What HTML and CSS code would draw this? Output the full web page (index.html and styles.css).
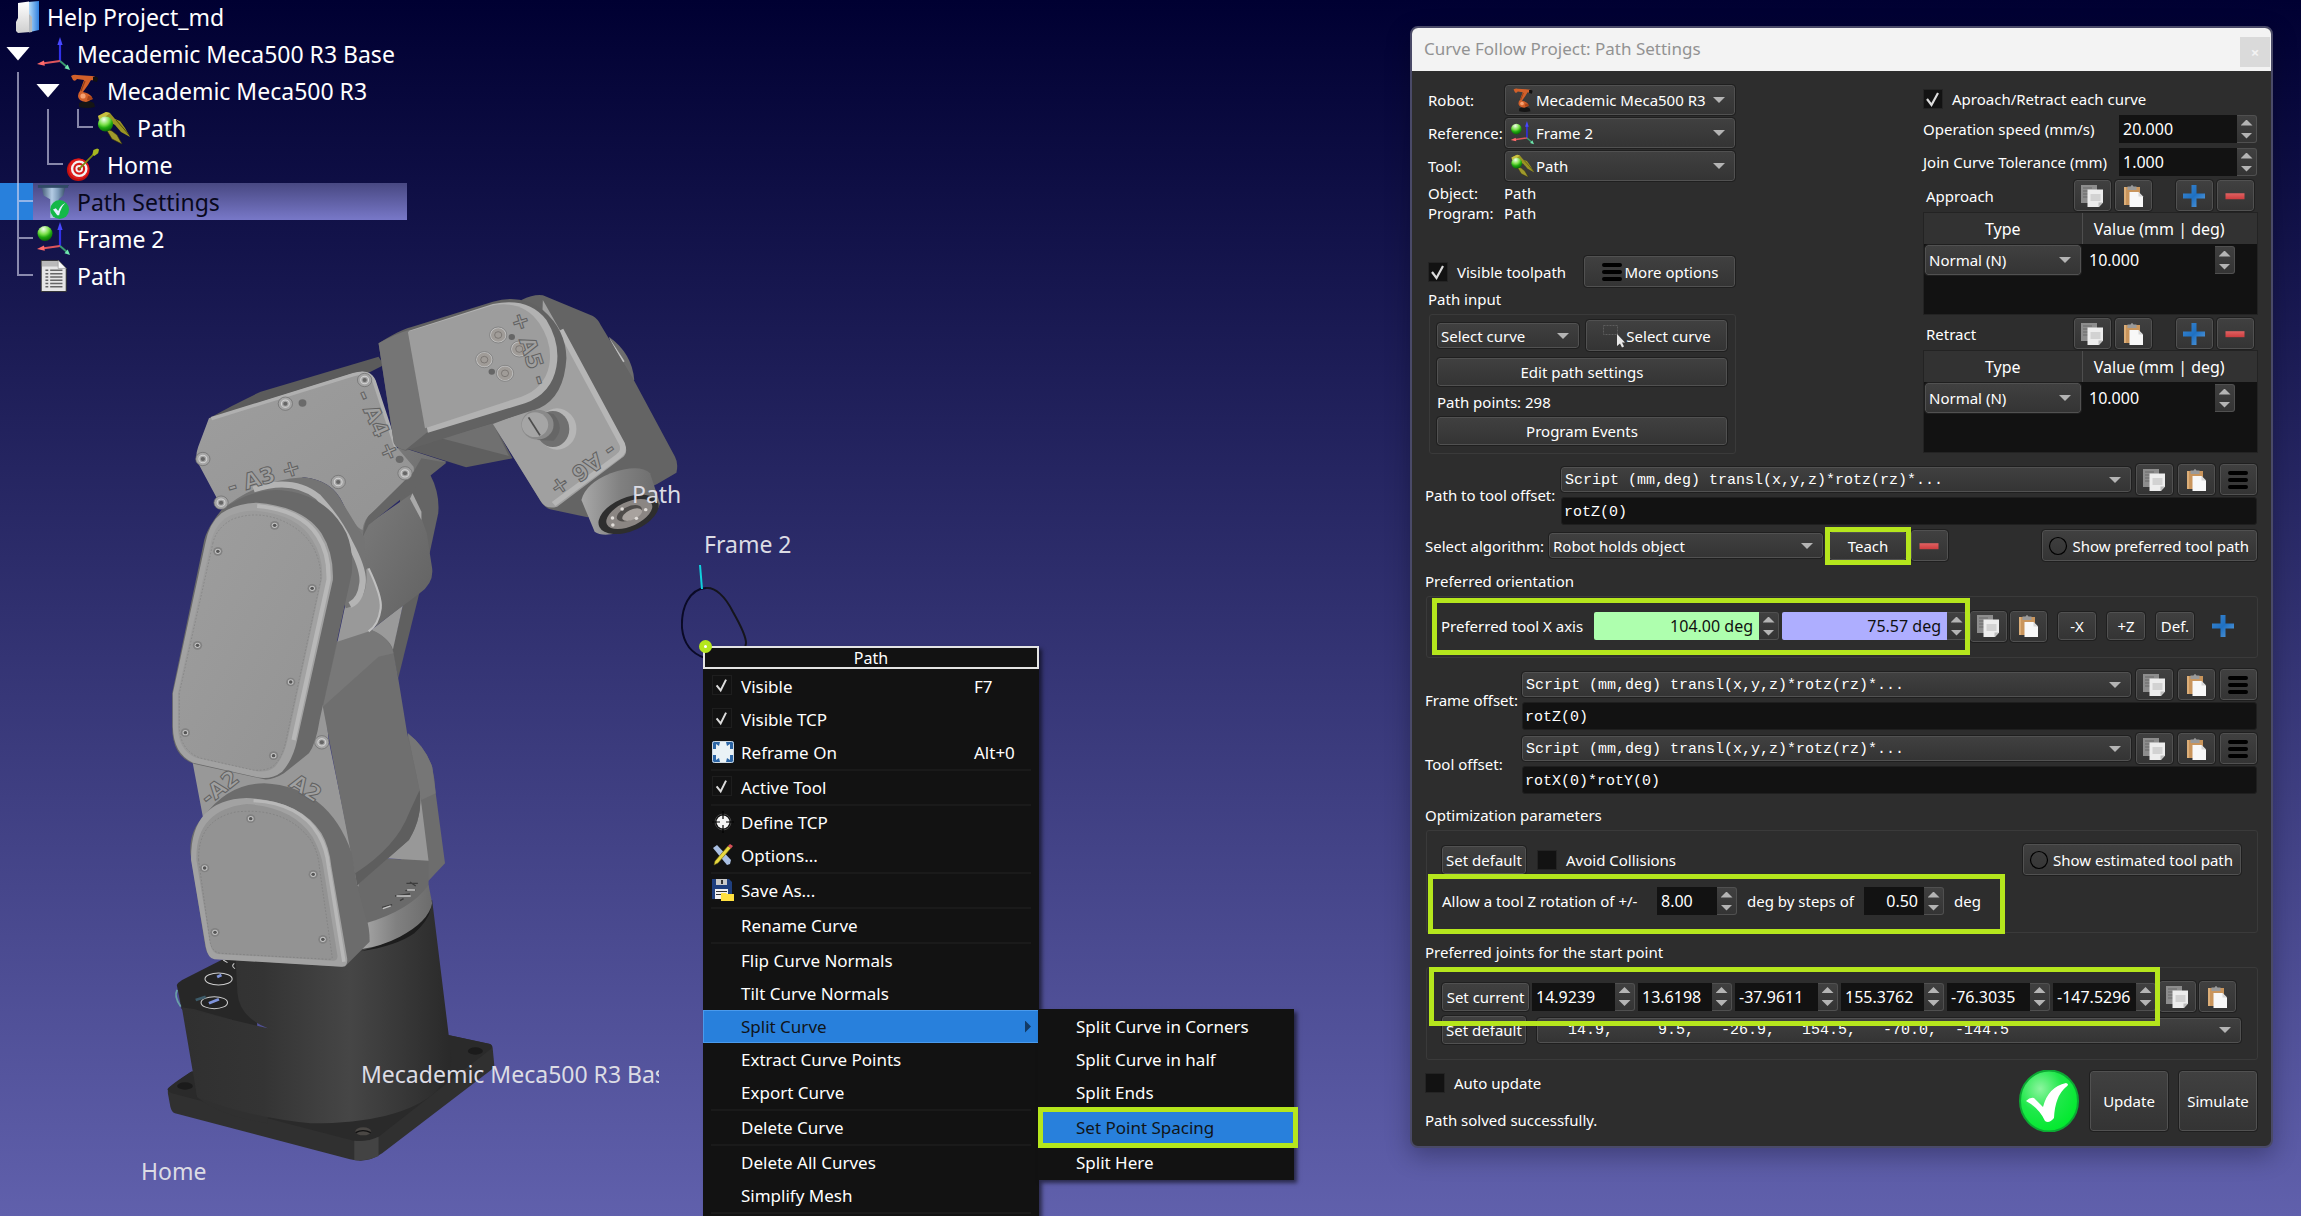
FILE: index.html
```html
<!DOCTYPE html>
<html lang="en">
<head>
<meta charset="utf-8">
<title>Help Project_md</title>
<link rel="stylesheet" href="styles.css">
</head>
<body>
<svg width="0" height="0" class="defs" aria-hidden="true">
  <defs>
    <radialGradient id="ball" cx=".4" cy=".2" r=".8"><stop offset="0" stop-color="#f4fff0"/><stop offset=".45" stop-color="#7be04a"/><stop offset=".7" stop-color="#1fa80f"/><stop offset="1" stop-color="#0b6a06"/></radialGradient>
    <linearGradient id="blueg" x1="0" y1="0" x2="1" y2="0"><stop offset="0" stop-color="#bfe2fa"/><stop offset="1" stop-color="#2f7fe0"/></linearGradient>
    <linearGradient id="whiteg" x1="0" y1="0" x2="0" y2="1"><stop offset="0" stop-color="#ffffff"/><stop offset="1" stop-color="#cfcfcf"/></linearGradient>
    <linearGradient id="funnel" x1="0" y1="0" x2="1" y2="0"><stop offset="0" stop-color="#1c3350"/><stop offset=".45" stop-color="#b4cce4"/><stop offset=".65" stop-color="#7f9dbb"/><stop offset="1" stop-color="#16283e"/></linearGradient>
    <linearGradient id="plusg" x1="0" y1="0" x2="1" y2="1"><stop offset="0" stop-color="#3f86cc"/><stop offset=".5" stop-color="#1e70c2"/><stop offset="1" stop-color="#5e9fdc"/></linearGradient>
    <linearGradient id="minusg" x1="0" y1="0" x2="0" y2="1"><stop offset="0" stop-color="#e06262"/><stop offset="1" stop-color="#cc3c3e"/></linearGradient>
    <radialGradient id="okg" cx=".35" cy=".3" r=".75"><stop offset="0" stop-color="#8cf59f"/><stop offset=".5" stop-color="#1fe84a"/><stop offset="1" stop-color="#00ea2c"/></radialGradient>
  </defs>
  <symbol id="i-folder" viewBox="0 0 34 34"><path d="M22 2 33 1V30L24 32z" fill="url(#blueg)"/><path d="M12 3 23 1.500V14l1.500 3V32L12 33l-2-2V22l2-4z" fill="url(#whiteg)"/><path d="M23 14l3 3v15l-3 .5z" fill="#b5b9bd"/></symbol>
  <symbol id="i-axes" viewBox="0 0 34 34"><path d="M24 24V5" stroke="#3030e8" stroke-width="2.200"/><path d="M24 0l2.600 8h-5.200z" fill="#4848ff"/><path d="M24 24 6 26.500" stroke="#e0555c" stroke-width="2"/><path d="M1 27l7-3.400.8 5.200z" fill="#ff6b6b"/><path d="M24 24l7 6" stroke="#3c9c70" stroke-width="2"/><path d="M34 33l-5.500-1.800 3.200-3.800z" fill="#6fe8ae"/></symbol>
  <symbol id="i-frame" viewBox="0 0 34 34"><use href="#i-axes"/><circle cx="9" cy="11.500" r="7.500" fill="url(#ball)"/></symbol>
  <symbol id="i-robot" viewBox="0 0 34 34"><path d="M13 29q8-4 15 0l1 4q-8 2-16 0z" fill="#151515"/><path d="M5 2q3-2 6-1l15 1q3 0 4 2-2 3-5 2l-3 5-5 7q6 1 9 5-1 4-6 5-8-1-8-6 0-3 2-5l4-11-7-1q-2 3-4 1z" fill="#d2602a"/><path d="M27 3q4-1 5 1l-1 4-4-1z" fill="#111"/><circle cx="17" cy="22" r="2.600" fill="#f6a070"/><path d="M22 22q4 0 5 3-3 2-6 1z" fill="#a84418"/><path d="M19 7l-4 10" stroke="#8e3c16" stroke-width="1.200"/></symbol>
  <symbol id="i-tool" viewBox="0 0 34 34"><path d="M2 5 10 1l4 1 5 6 5 2 5 7 5 9-9-5-6-7-7-4z" fill="#9a9424"/><path d="M2 5l8-4 4 1-5 4-6 3z" fill="#c8c040"/><path d="M10 18l6 2 5 4 5 9-10-5z" fill="#a09a2c" stroke="#3a380a" stroke-width=".6"/><path d="M20 9l8 9 5 6" stroke="#55510e" stroke-width="1" fill="none"/><circle cx="9.500" cy="13" r="7.600" fill="url(#ball)"/></symbol>
  <symbol id="i-target" viewBox="0 0 36 36"><circle cx="13" cy="23" r="12" fill="#c01010"/><circle cx="13.500" cy="22" r="11" fill="#e01c1c"/><circle cx="14" cy="22" r="8.800" fill="#f2f2f2"/><circle cx="14" cy="22" r="6.300" fill="#d81818"/><circle cx="14" cy="22" r="4" fill="#f2f2f2"/><circle cx="14" cy="22" r="2" fill="#c01414"/><path d="M14 22 31 5" stroke="#7c8a10" stroke-width="1.800"/><path d="M28 7l1-5 4-1.500 2 1-1 4-4 3z" fill="#a8b820"/></symbol>
  <symbol id="i-funnel" viewBox="0 0 34 36"><path d="M1 0h33l-4 3-2 8-5 4v20H14V15L7 11 5 3z" fill="url(#funnel)"/><path d="M1 1.500h32" stroke="#2f4a66" stroke-width="3"/><circle cx="24" cy="26" r="10" fill="#14b848"/><path d="M17 26l3-1.500 2.500 3Q25 21 30 19q-5 5-6.500 13h-2z" fill="#e4f0ff"/></symbol>
  <symbol id="i-doc" viewBox="0 0 34 36"><path d="M4.500 1.500H23L31 10v24.500H4.500z" fill="#e6e6e6" stroke="#2a2a2a"/><path d="M5 2h17l2 2v4H5z" fill="#8d8d8d" opacity=".5"/><path d="M22.500 1.500 31 10h-8.500z" fill="#fafafa" stroke="#888" stroke-width=".6"/><path d="M9 12h3m2 0h13M9 15.500h3m2 0h13M9 19h3m2 0h13M9 22.500h3m2 0h13M9 26h3m2 0h13M9 29.500h3m2 0h13" stroke="#666" stroke-width="1.600"/></symbol>
  <symbol id="i-copy" viewBox="0 0 24 24"><path d="M1 1h16v18H1z" fill="#8d8d8d"/><path d="M3 4h9M3 7h5M3 10h5M3 13h5" stroke="#6a6a6a" stroke-width="1.200"/><path d="M7.500 5.500h15.500v13l-4 4.500H7.500z" fill="#ededed"/><path d="M10.500 10h10v7h-10z" fill="#d2d2d2"/><path d="M23 18.500h-4.500V23z" fill="#bdbdbd"/></symbol>
  <symbol id="i-paste" viewBox="0 0 24 24"><path d="M3 3h16v18H3z" fill="#c9955c"/><path d="M3 3h2v18H3z" fill="#dcae78"/><path d="M6.500 2.500h3q1.500-3 3 0h3V6h-9z" fill="#9a9a9a"/><path d="M8.500 8h9l4.500 4.500V23H8.500z" fill="#f8f8f8"/><path d="M17.500 8v4.500H22z" fill="#d8d8d8"/></symbol>
  <symbol id="i-plus" viewBox="0 0 24 24"><path d="M9.500 1h5v8.500H23v5h-8.500V23h-5v-8.500H1v-5h8.500z" fill="url(#plusg)"/></symbol>
  <symbol id="i-minus" viewBox="0 0 24 24"><path d="M2.500 9.200h19v6h-19z" fill="url(#minusg)"/></symbol>
  <symbol id="i-burger" viewBox="0 0 24 24"><path d="M4 5h16M4 12h16M4 19h16" stroke="#000" stroke-width="4" stroke-linecap="round"/></symbol>
  <symbol id="i-ring" viewBox="0 0 20 20"><circle cx="10" cy="10" r="8.500" fill="none" stroke="#000" stroke-width="1.200"/></symbol>
  <symbol id="i-pick" viewBox="0 0 24 24"><path d="M1.500 1.500h14v9h-14z" fill="none" stroke="#5c5c5c" stroke-dasharray="2 1"/><path d="M15 10v12l3-2.500 2 4 2-1-2-4h3z" fill="#e8e8e8"/></symbol>
  <symbol id="i-tick" viewBox="0 0 20 20"><path d="M4 10.500 8.500 16 14.500 4" fill="none" stroke="#dcdcdc" stroke-width="2.200"/></symbol>
  <symbol id="i-fit" viewBox="0 0 22 22"><rect width="22" height="22" rx="2" fill="#2c66a6"/><path d="M8 1h6l1 4 3-2v5h3v6h-3v5l-3-2-1 4H8l-1-4-3 2v-5H1V8h3V3l3 2z" fill="#eaf2f6"/><rect x="5" y="5" width="12" height="12" fill="#eaf2f6"/><rect x=".5" y=".5" width="21" height="21" rx="2" fill="none" stroke="#cfd8e0"/></symbol>
  <symbol id="i-tcp" viewBox="0 0 22 22"><circle cx="11" cy="11" r="8" fill="#0c0c0c" stroke="#444"/><circle cx="11" cy="11" r="6.500" fill="#f4f4f4"/><path d="M11 0v8M11 14v8M0 11h8M14 11h8" stroke="#000" stroke-width="1.200"/></symbol>
  <symbol id="i-opts" viewBox="0 0 22 22"><path d="M1 4 5 1l14 15-1 4-3 1z" fill="#a9bfe2"/><path d="M3 17 16 2l3 2L6 19l-4 2z" fill="#e8d940" stroke="#6b6210" stroke-width=".6"/><path d="M16 2l2-2 3 2-2 2.500z" fill="#d8505a"/></symbol>
  <symbol id="i-save" viewBox="0 0 22 22"><path d="M0 0h17l3 3v17H0z" fill="#1f3f7e"/><path d="M4 0h11v6H4z" fill="#c9c9c9"/><path d="M9 1h2v4H9z" fill="#333"/><path d="M3 10h13v10H3z" fill="#f0f0f0"/><path d="M4 12.500h11M4 15.500h11" stroke="#333" stroke-width="1.200"/><path d="M9 14h5l1 1h7v7H9z" fill="#ffe040"/></symbol>
</svg>

<main class="station">
  <svg class="robot" viewBox="150 280 560 900" role="img" aria-label="Robot arm">
    <defs>
      <linearGradient id="cyl" x1="0" x2="1" y1="0" y2="0"><stop offset="0" stop-color="#303030"/><stop offset=".3" stop-color="#343434"/><stop offset=".62" stop-color="#464646"/><stop offset=".85" stop-color="#353535"/><stop offset="1" stop-color="#292929"/></linearGradient>
      <linearGradient id="ringg" x1="0" x2="1" y1="0" y2="0"><stop offset="0" stop-color="#a8a8a8"/><stop offset=".5" stop-color="#808080"/><stop offset="1" stop-color="#6c6c6c"/></linearGradient>
      <linearGradient id="side" x1="0" x2="1" y1="0" y2="1"><stop offset="0" stop-color="#828282"/><stop offset=".5" stop-color="#707070"/><stop offset="1" stop-color="#5e5e5e"/></linearGradient>
      <linearGradient id="face" x1="0" x2="1" y1="0" y2="1"><stop offset="0" stop-color="#9e9e9e"/><stop offset="1" stop-color="#939393"/></linearGradient>
      <g id="screw"><circle r="13" fill="#828282"/><circle r="8" fill="#c2c2c2"/><circle r="5" fill="#555"/></g>
      <g id="bolt"><circle r="20" fill="#a5a5a5" stroke="#6a6a6a" stroke-width="2"/><circle r="11" fill="none" stroke="#d4d4d4" stroke-width="3"/><circle r="6" fill="#666"/></g>
      <g id="cap"><circle r="22" fill="#a09c98" stroke="#c4c4c4" stroke-width="3"/><circle r="24" fill="none" stroke="#777" stroke-width="2"/><circle r="10" fill="none" stroke="#6c6865" stroke-width="2"/></g>
    </defs>
    <g transform="matrix(.35714 0 0 .33333 150 280)">
      <!-- base -->
      <path d="M50 2425 115 2375 835 2265 952 2292Q960 2296 960 2310L964 2355Q964 2362 955 2370L650 2620Q620 2642 590 2642 575 2642 560 2638L70 2500Q60 2495 57 2480L50 2440z" fill="#303030"/>
      <path d="M50 2428Q52 2418 115 2375L835 2265 952 2292Q962 2298 955 2306L640 2570Q610 2585 570 2582L62 2440Q50 2436 50 2428z" fill="#2a2a2a"/>
      <path d="M572 2582Q610 2586 640 2570L640 2628Q610 2644 572 2640z" fill="#434343"/>
      <ellipse cx="98" cy="2418" rx="22" ry="11" fill="#1b1b1b"/><ellipse cx="911" cy="2313" rx="21" ry="11" fill="#1b1b1b"/><ellipse cx="597" cy="2554" rx="22" ry="12" fill="#4a4744"/><path d="M576 2558q20-12 42 0" fill="none" stroke="#111" stroke-width="4"/>
      <path d="M75 2115Q78 2108 90 2100L200 2040 300 2040V2250L100 2200 88 2185z" fill="#272727"/>
      <path d="M76 2130q-10 20 10 50" fill="none" stroke="#6aa0a8" stroke-width="5"/>
      <path d="M78 2118l10 64 35 5 107 32 20 30 80 70V2530Q200 2510 132 2452L92 2200z" fill="#303030"/>
      <path d="M240 2040 790 1860 845 2340Q846 2370 800 2435 700 2530 450 2530 270 2510 132 2450L112 2300 92 2185 330 2245Q250 2210 245 2140z" fill="url(#cyl)"/>
      <ellipse cx="192" cy="2097" rx="38" ry="18" fill="#222" stroke="#cfcfcf" stroke-width="3"/><ellipse cx="180" cy="2168" rx="37" ry="18" fill="#222" stroke="#cfcfcf" stroke-width="3"/>
      <path d="M165 2170l28-12M188 2091l12-6" stroke="#7f94dc" stroke-width="8"/><path d="M128 2160l28-10" stroke="#3c5a68" stroke-width="8"/><path d="M205 2040l12 8M236 2050q-10 8 2 16" fill="none" stroke="#ccc" stroke-width="3"/>
      <path d="M590 2014Q700 1980 750 1930 785 1895 790 1862l-4 24Q780 1920 740 1960 690 1998 590 2014z" fill="#1d1d1d"/>
      <!-- turntable -->
      <path d="M722 1360Q770 1400 790 1460 798 1500 800 1540L826 1750 780 1802 700 1800z" fill="#6d6d6d"/>
      <path d="M722 1360Q770 1400 790 1460L800 1540 760 1560z" fill="#767676"/>
      <path d="M560 1730 780 1742V1830Q730 1890 610 1930L570 1900z" fill="#6a6a6a"/>
      <path d="M604 1930Q730 1890 780 1815L790 1870Q780 1925 700 1970 650 1998 590 2008z" fill="url(#ringg)"/>
      <path d="M755 1530 780 1742 660 1735z" fill="#989898"/>
      <path d="M650 1882l28-8M686 1848l42-6M715 1832l28-2M728 1806l16 12M718 1810h32M700 1862l10-6" stroke="#3e3e3e" stroke-width="4"/><path d="M690 1848h40M720 1830h22M652 1886l22-8" stroke="#c6c6c6" stroke-width="4"/>
      <!-- lower link -->
      <path d="M708 975 755 935 695 1195 678 1110z" fill="#606060"/><path d="M708 975 680 1110 620 1050z" fill="#9a9a9a"/>
      <path d="M118 1440 490 1250 500 1380 585 1820 400 1640 148 1610z" fill="#989898"/>
      <path d="M490 1100Q560 1065 620 1050 680 1080 682 1120L695 1195 720 1360 755 1530Q765 1610 725 1680L580 1816 484 1280z" fill="#6f6f6f"/>
      <path d="M525 1085 620 1050Q670 1070 682 1120L640 1130 484 1280z" fill="#787878"/>
      <path d="M755 1530Q765 1610 725 1680L580 1816 575 1780Q690 1700 725 1600z" fill="#5e5e5e"/>
      <!-- elbow -->
      <path d="M785 585Q812 640 807 700L783 820 700 800 700 600z" fill="#656565"/>
      <path d="M600 740 830 545 700 500 560 620 550 830 610 1050 625 1045 755 940Q795 910 790 865L782 810 775 760 735 640z" fill="url(#side)"/>
      <path d="M735 640l25 55v25l-32-64z" fill="#a9a9a9"/>
      <path d="M610 865Q650 950 646 985 640 1040 610 1055L525 1085 545 985 570 900z" fill="#999" />
      <path d="M612 865Q650 950 646 985 640 1035 612 1054" fill="none" stroke="#c0c0c0" stroke-width="6"/>
      <path d="M165 415Q240 370 310 335L640 230 655 255 590 290 180 425z" fill="#5b5b5b"/>
      <path d="M165 415 570 280Q615 265 630 300L690 500 738 560Q742 585 725 605L620 700Q600 715 595 750 570 740 540 670 510 600 430 592L215 680 190 660 130 540Q128 520 135 500z" fill="url(#face)"/>
      <path d="M172 416 570 284Q615 268 628 305L688 500" fill="none" stroke="#b0b0b0" stroke-width="10"/>
      <path d="M738 575 620 700Q600 715 596 770L612 735 830 548 760 535z" fill="#656565"/>
      <path d="M200 690Q300 600 430 592 510 600 540 670L600 775 606 880Q610 970 548 985L500 800 300 640z" fill="#747474"/>
      <path d="M290 628Q400 590 470 650 530 720 560 790 600 870 595 910 590 960 560 975" fill="none" stroke="#b4b4b4" stroke-width="18"/>
      <!-- upper cover -->
      <path d="M150 790Q155 750 200 690 290 620 380 632 500 650 550 760 570 810 565 880L475 1320Q465 1390 445 1420L375 1480Q345 1500 320 1498L125 1452Q62 1430 62 1340V1240z" fill="#696969"/>
      <path d="M155 790Q165 730 200 700 240 670 300 668 430 680 480 760 515 820 512 900L412 1380Q400 1440 370 1475 340 1500 300 1492L120 1448Q65 1420 64 1340V1240z" fill="#a2a2a2"/>
      <path d="M300 678Q425 690 470 768 502 820 500 900L402 1380" fill="none" stroke="#b8b8b8" stroke-width="12"/>
      <path d="M168 800Q175 745 210 715 250 690 300 692 415 705 455 780 485 830 482 895L385 1380Q375 1430 350 1460 330 1478 300 1474L130 1434Q78 1410 78 1340V1240z" fill="url(#face)"/>
      <path d="M176 790Q185 745 230 718 300 690 370 722 440 755 465 820 480 860 478 900L382 1375Q370 1440 340 1462 310 1476 280 1468L140 1434Q84 1410 82 1340V1240z" fill="none" stroke="#808080" stroke-width="2" stroke-dasharray="5 5"/>
      <use href="#screw" x="349" y="736"/><use href="#screw" x="190" y="814"/><use href="#screw" x="454" y="925"/><use href="#screw" x="133" y="1096"/><use href="#screw" x="394" y="1206"/><use href="#screw" x="99" y="1358"/><use href="#screw" x="346" y="1427"/>
      <!-- lower cover -->
      <path d="M150 1610Q220 1510 320 1510 500 1520 565 1720L580 1816 605 1915Q615 1940 615 1985L545 2060 180 2036Q160 2030 155 2000L113 1720Q110 1650 150 1610z" fill="#6c6c6c"/>
      <path d="M115 1740Q112 1560 270 1554 420 1560 480 1660 502 1700 508 1760L552 2035Q555 2062 535 2060L180 2038Q162 2034 156 2000z" fill="#a2a2a2"/>
      <path d="M290 1562Q420 1570 472 1664 495 1706 500 1760L543 2045" fill="none" stroke="#b8b8b8" stroke-width="10"/>
      <path d="M130 1740Q126 1590 270 1572 400 1580 455 1670 480 1720 485 1760L525 2028Q525 2042 515 2042L190 2022Q174 2020 168 1990z" fill="#939393"/>
      <path d="M136 1740Q134 1620 240 1596 380 1580 450 1680 472 1720 474 1760L510 2030Q512 2038 500 2038L200 2020Q174 2018 168 1985z" fill="none" stroke="#7c7c7c" stroke-width="2" stroke-dasharray="5 5"/>
      <use href="#screw" x="282" y="1616"/><use href="#screw" x="153" y="1764"/><use href="#screw" x="457" y="1783"/><use href="#screw" x="182" y="1957"/><use href="#screw" x="484" y="1978"/>
      <use href="#bolt" x="481" y="1387"/>
      <use href="#bolt" x="379" y="371"/><use href="#bolt" x="601" y="300"/><use href="#bolt" x="148" y="537"/><use href="#bolt" x="199" y="668"/><use href="#bolt" x="527" y="606"/><use href="#bolt" x="714" y="580"/>
      <circle cx="427" cy="369" r="11" fill="#6a6a6a"/><circle cx="699" cy="538" r="11" fill="#6a6a6a"/>
      <!-- wrist -->
      <path d="M715 505 960 425 1015 535 885 562z" fill="#5f5f5f"/><path d="M815 475 960 430 1005 528z" fill="#707070"/>
      <path d="M1285 170Q1350 220 1356 300L1320 300z" fill="#6d6d6d"/><path d="M1285 172l44 72-6 4z" fill="#c0c0c0"/>
      <path d="M1040 60Q1075 42 1100 46L1240 108Q1255 118 1262 135L1352 295 1470 530Q1480 550 1474 578L1420 612 1225 712 1120 688Q1105 682 1095 665L960 430z" fill="#646464"/>
      <path d="M1100 60 1330 495Q1340 520 1320 535L1140 680Q1110 690 1095 665L960 432 1090 380z" fill="#a0a0a0"/>
      <path d="M1150 150 1322 492Q1330 515 1312 528L1130 672" fill="none" stroke="#b6b6b6" stroke-width="16" stroke-linejoin="round"/>
      <ellipse cx="1140" cy="447" rx="54" ry="62" fill="#b6b6b6"/><ellipse cx="1128" cy="447" rx="46" ry="54" fill="#707070"/>
      <path d="M1075 388 1130 402Q1165 445 1130 482L1085 480z" fill="#666"/><circle cx="1085" cy="434" r="45" fill="#8a8a8a"/><circle cx="1078" cy="434" r="37" fill="#a5a5a5"/><path d="M1060 412l32 54" stroke="#4c4c4c" stroke-width="5"/>
      <path d="M640 190Q700 150 730 142L960 65Q1040 40 1100 90 1165 150 1166 235 1160 350 1090 385L715 512Q690 505 683 490z" fill="#626262"/>
      <path d="M640 190Q690 160 725 150L778 455 715 510Q690 505 683 490z" fill="#757575"/>
      <path d="M725 152 960 72Q1060 50 1110 120 1150 190 1138 260 1125 340 1050 370L778 458z" fill="#b2b2b2"/>
      <path d="M722 155 960 76Q1045 60 1090 130 1128 190 1118 255 1105 325 1040 350L770 445z" fill="#9d9d9d"/>
      <use href="#cap" x="975" y="165"/><use href="#cap" x="1034" y="207"/><use href="#cap" x="936" y="239"/><use href="#cap" x="994" y="280"/><circle cx="1013" cy="171" r="9" fill="#666"/><circle cx="957" cy="275" r="9" fill="#666"/>
      <!-- tool flange -->
      <path d="M1208 660Q1220 610 1290 580 1370 550 1400 580L1428 670Q1420 710 1340 750 1270 775 1245 755z" fill="url(#ringg)"/>
      <ellipse cx="1340" cy="703" rx="90" ry="50" fill="#2e2e2e" transform="rotate(-25 1340 703)"/><ellipse cx="1342" cy="702" rx="70" ry="36" fill="#8b8683" transform="rotate(-27 1342 702)"/><ellipse cx="1342" cy="700" rx="38" ry="20" fill="#4f4c4a" transform="rotate(-27 1342 700)"/><ellipse cx="1350" cy="704" rx="30" ry="15" fill="#a8a29e" transform="rotate(-27 1350 704)"/>
      <g fill="#e0dcd8"><circle cx="1296" cy="735" r="5"/><circle cx="1295" cy="714" r="5"/><circle cx="1322" cy="687" r="5"/><circle cx="1362" cy="715" r="5"/><circle cx="1388" cy="689" r="5"/></g>
    </g>
    <g class="engraving">
      <text transform="translate(230 495) rotate(-17)">- A3 +</text>
      <text transform="translate(356 394) rotate(66)">- A4 +</text>
      <text transform="translate(511 315) rotate(72)">+ A5 -</text>
      <text transform="translate(610 442) rotate(145)">- A6 +</text>
      <text transform="translate(208 806) rotate(-38)">-A2</text>
      <text transform="translate(288 786) rotate(32)">A2</text>
    </g>
  </svg>

  <svg class="curve" viewBox="0 0 80 100" aria-hidden="true">
    <path d="M25 23C34 22 44 31 52 47 60 61 65 71 65 78 64 91 52 95 38 95" fill="none" stroke="#15151c" stroke-width="2"/>
    <path d="M25 23C8 24 0 43 1 63 3 83 15 90 24 93" fill="none" stroke="#0a0a26" stroke-width="2"/>
    <path d="M19 0l2 24" stroke="#10d0dc" stroke-width="2"/>
  </svg>

  <span class="tag tag-path">Path</span>
  <span class="tag tag-frame">Frame 2</span>
  <span class="tag tag-base">Mecademic Meca500 R3 Base</span>
  <span class="tag tag-home">Home</span>

  <nav class="tree" aria-label="Station tree">
    <ul>
      <li class="row l0"><svg class="ico"><use href="#i-folder"/></svg>Help Project_md</li>
      <li class="row l1"><i class="exp"></i><svg class="ico"><use href="#i-axes"/></svg>Mecademic Meca500 R3 Base</li>
      <li class="row l2"><i class="exp"></i><svg class="ico"><use href="#i-robot"/></svg>Mecademic Meca500 R3</li>
      <li class="row l3"><i class="nil"></i><svg class="ico"><use href="#i-tool"/></svg>Path</li>
      <li class="row l2"><i class="nil"></i><svg class="ico"><use href="#i-target"/></svg>Home</li>
      <li class="row l1 selected"><i class="nil"></i><svg class="ico"><use href="#i-funnel"/></svg>Path Settings</li>
      <li class="row l1"><i class="nil"></i><svg class="ico"><use href="#i-frame"/></svg>Frame 2</li>
      <li class="row l1"><i class="nil"></i><svg class="ico"><use href="#i-doc"/></svg>Path</li>
    </ul>
    <svg class="links" viewBox="0 0 100 296" aria-hidden="true"><path d="M18 74V277H33M18 203H33M18 240H33M48 111V166H63M78 111V129H93" fill="none" stroke="#d8d8f0" stroke-opacity=".6" stroke-width="2"/></svg>
  </nav>

  <div class="menu main-menu" role="menu" aria-label="Path">
    <div class="menu-title">Path</div>
    <button role="menuitemcheckbox" aria-checked="true"><svg class="mi box"><use href="#i-tick"/></svg>Visible<kbd>F7</kbd></button>
    <button role="menuitemcheckbox" aria-checked="true"><svg class="mi box"><use href="#i-tick"/></svg>Visible TCP</button>
    <button role="menuitem"><svg class="mi"><use href="#i-fit"/></svg>Reframe On<kbd>Alt+0</kbd></button>
    <hr>
    <button role="menuitemcheckbox" aria-checked="true"><svg class="mi box"><use href="#i-tick"/></svg>Active Tool</button>
    <hr>
    <button role="menuitem"><svg class="mi"><use href="#i-tcp"/></svg>Define TCP</button>
    <button role="menuitem"><svg class="mi"><use href="#i-opts"/></svg>Options...</button>
    <hr>
    <button role="menuitem"><svg class="mi"><use href="#i-save"/></svg>Save As...</button>
    <hr>
    <button role="menuitem">Rename Curve</button>
    <hr>
    <button role="menuitem">Flip Curve Normals</button>
    <button role="menuitem">Tilt Curve Normals</button>
    <button role="menuitem" class="active" aria-haspopup="true">Split Curve<i class="more"></i></button>
    <button role="menuitem">Extract Curve Points</button>
    <button role="menuitem">Export Curve</button>
    <hr>
    <button role="menuitem">Delete Curve</button>
    <hr>
    <button role="menuitem">Delete All Curves</button>
    <button role="menuitem">Simplify Mesh</button>
    <hr>
    <button role="menuitem" aria-label="More curve actions"></button>
    <span class="dot"></span>
  </div>

  <div class="menu sub-menu" role="menu" aria-label="Split Curve">
    <button role="menuitem">Split Curve in Corners</button>
    <button role="menuitem">Split Curve in half</button>
    <button role="menuitem">Split Ends</button>
    <hr>
    <button role="menuitem" class="active mark mark-spacing">Set Point Spacing</button>
    <hr>
    <button role="menuitem">Split Here</button>
  </div>

  <section class="dialog" role="dialog" aria-labelledby="dlg-title">
    <header class="titlebar"><h1 id="dlg-title">Curve Follow Project: Path Settings</h1><button class="close" aria-label="Close">×</button></header>
    <form class="body">
      <div class="top">
        <div class="left">
          <div class="picks">
            <label for="robot">Robot:</label><span class="pick"><svg><use href="#i-robot"/></svg><select id="robot"><option>Mecademic Meca500 R3</option></select></span>
            <label for="ref">Reference:</label><span class="pick"><svg><use href="#i-frame"/></svg><select id="ref"><option>Frame 2</option></select></span>
            <label for="tool">Tool:</label><span class="pick"><svg><use href="#i-tool"/></svg><select id="tool"><option>Path</option></select></span>
          </div>
          <dl><dt>Object:</dt><dd>Path</dd><dt>Program:</dt><dd>Path</dd></dl>
          <div class="line view-line"><label class="check"><input type="checkbox" checked>Visible toolpath</label><button type="button" class="btn more-btn"><svg class="bi"><use href="#i-burger"/></svg>More options</button></div>
          <div class="cap">Path input</div>
          <div class="group input-group">
            <div class="line"><select class="short" aria-label="Input kind"><option>Select curve</option></select><button type="button" class="btn grow"><svg class="bi"><use href="#i-pick"/></svg>Select curve</button></div>
            <button type="button" class="btn low">Edit path settings</button>
            <div class="points">Path points: 298</div>
            <button type="button" class="btn low">Program Events</button>
          </div>
        </div>
        <div class="right">
          <label class="check"><input type="checkbox" checked>Aproach/Retract each curve</label>
          <div class="line speed first"><label for="speed">Operation speed (mm/s)</label><span class="spin w138"><input id="speed" value="20.000"><span class="ud"><button type="button" aria-label="Up"></button><button type="button" aria-label="Down"></button></span></span></div>
          <div class="line speed"><label for="tol">Join Curve Tolerance (mm)</label><span class="spin w138"><input id="tol" value="1.000"><span class="ud"><button type="button" aria-label="Up"></button><button type="button" aria-label="Down"></button></span></span></div>
          <div class="line tools"><span class="fill">Approach</span><button type="button" class="btn sq" aria-label="Copy"><svg class="bi"><use href="#i-copy"/></svg></button><button type="button" class="btn sq" aria-label="Paste"><svg class="bi"><use href="#i-paste"/></svg></button><button type="button" class="btn sq apart" aria-label="Add"><svg class="bi"><use href="#i-plus"/></svg></button><button type="button" class="btn sq" aria-label="Remove"><svg class="bi"><use href="#i-minus"/></svg></button></div>
          <div class="sheet"><table><thead><tr><th class="c1">Type</th><th class="c2">Value (mm | deg)</th><th></th></tr></thead><tbody><tr><td><select aria-label="Approach type"><option>Normal (N)</option></select></td><td><span class="spin"><input aria-label="Approach value" value="10.000"><span class="ud"><button type="button" aria-label="Up"></button><button type="button" aria-label="Down"></button></span></span></td><td></td></tr></tbody></table></div>
          <div class="line tools"><span class="fill">Retract</span><button type="button" class="btn sq" aria-label="Copy"><svg class="bi"><use href="#i-copy"/></svg></button><button type="button" class="btn sq" aria-label="Paste"><svg class="bi"><use href="#i-paste"/></svg></button><button type="button" class="btn sq apart" aria-label="Add"><svg class="bi"><use href="#i-plus"/></svg></button><button type="button" class="btn sq" aria-label="Remove"><svg class="bi"><use href="#i-minus"/></svg></button></div>
          <div class="sheet"><table><thead><tr><th class="c1">Type</th><th class="c2">Value (mm | deg)</th><th></th></tr></thead><tbody><tr><td><select aria-label="Retract type"><option>Normal (N)</option></select></td><td><span class="spin"><input aria-label="Retract value" value="10.000"><span class="ud"><button type="button" aria-label="Up"></button><button type="button" aria-label="Down"></button></span></span></td><td></td></tr></tbody></table></div>
        </div>
      </div>

      <div class="offset wide">
        <label for="pto">Path to tool offset:</label>
        <div class="line"><select class="short mono grow" aria-label="Path to tool format"><option>Script (mm,deg) transl(x,y,z)*rotz(rz)*...</option></select><button type="button" class="btn sq" aria-label="Copy"><svg class="bi"><use href="#i-copy"/></svg></button><button type="button" class="btn sq" aria-label="Paste"><svg class="bi"><use href="#i-paste"/></svg></button><button type="button" class="btn sq" aria-label="More"><svg class="bi"><use href="#i-burger"/></svg></button></div>
        <input class="mono" id="pto" value="rotZ(0)">
      </div>

      <div class="line algo">
        <label for="algo">Select algorithm:</label><select class="short" id="algo"><option>Robot holds object</option></select>
        <span class="mark mark-teach"><button type="button" class="btn low">Teach</button></span>
        <button type="button" class="btn sq" aria-label="Remove"><svg class="bi"><use href="#i-minus"/></svg></button>
        <button type="button" class="btn show"><svg class="bi ring"><use href="#i-ring"/></svg>Show preferred tool path</button>
      </div>

      <div class="cap orient-cap">Preferred orientation</div>
      <div class="group line orient">
        <div class="line mark mark-axis">
          <label for="ax">Preferred tool X axis</label>
          <span class="spin w185 green"><input id="ax" value="104.00 deg"><span class="ud"><button type="button" aria-label="Up"></button><button type="button" aria-label="Down"></button></span></span>
          <span class="spin w185 violet"><input aria-label="Second angle" value="75.57 deg"><span class="ud"><button type="button" aria-label="Up"></button><button type="button" aria-label="Down"></button></span></span>
        </div>
        <button type="button" class="btn sq" aria-label="Copy"><svg class="bi"><use href="#i-copy"/></svg></button>
        <button type="button" class="btn sq" aria-label="Paste"><svg class="bi"><use href="#i-paste"/></svg></button>
        <button type="button" class="btn low axis">-X</button><button type="button" class="btn low axis">+Z</button><button type="button" class="btn low axis">Def.</button>
        <button type="button" class="btn sq flat" aria-label="Add"><svg class="bi"><use href="#i-plus"/></svg></button>
      </div>

      <div class="offset frame-offset">
        <label for="fo">Frame offset:</label>
        <div class="line"><select class="short mono grow" aria-label="Frame offset format"><option>Script (mm,deg) transl(x,y,z)*rotz(rz)*...</option></select><button type="button" class="btn sq" aria-label="Copy"><svg class="bi"><use href="#i-copy"/></svg></button><button type="button" class="btn sq" aria-label="Paste"><svg class="bi"><use href="#i-paste"/></svg></button><button type="button" class="btn sq" aria-label="More"><svg class="bi"><use href="#i-burger"/></svg></button></div>
        <input class="mono" id="fo" value="rotZ(0)">
      </div>
      <div class="offset">
        <label for="to">Tool offset:</label>
        <div class="line"><select class="short mono grow" aria-label="Tool offset format"><option>Script (mm,deg) transl(x,y,z)*rotz(rz)*...</option></select><button type="button" class="btn sq" aria-label="Copy"><svg class="bi"><use href="#i-copy"/></svg></button><button type="button" class="btn sq" aria-label="Paste"><svg class="bi"><use href="#i-paste"/></svg></button><button type="button" class="btn sq" aria-label="More"><svg class="bi"><use href="#i-burger"/></svg></button></div>
        <input class="mono" id="to" value="rotX(0)*rotY(0)">
      </div>

      <div class="cap opt-cap">Optimization parameters</div>
      <div class="group opt">
        <div class="line"><button type="button" class="btn low def">Set default</button><label class="check"><input type="checkbox">Avoid Collisions</label><button type="button" class="btn show"><svg class="bi ring"><use href="#i-ring"/></svg>Show estimated tool path</button></div>
        <div class="line mark mark-rot">
          <label class="rot-label" for="rot">Allow a tool Z rotation of +/-</label>
          <span class="spin w80"><input id="rot" value="8.00"><span class="ud"><button type="button" aria-label="Up"></button><button type="button" aria-label="Down"></button></span></span>
          <label class="step-label" for="step">deg by steps of</label>
          <span class="spin w80 end"><input id="step" value="0.50"><span class="ud"><button type="button" aria-label="Up"></button><button type="button" aria-label="Down"></button></span></span>
          <span class="unit">deg</span>
        </div>
      </div>

      <div class="cap joints-cap">Preferred joints for the start point</div>
      <div class="group joints">
        <div class="line">
          <div class="line mark mark-joints">
            <button type="button" class="btn low cur">Set current</button>
            <span class="spin w103"><input aria-label="Joint 1" value="14.9239"><span class="ud"><button type="button" aria-label="Up"></button><button type="button" aria-label="Down"></button></span></span>
            <span class="spin w94"><input aria-label="Joint 2" value="13.6198"><span class="ud"><button type="button" aria-label="Up"></button><button type="button" aria-label="Down"></button></span></span>
            <span class="spin w103"><input aria-label="Joint 3" value="-37.9611"><span class="ud"><button type="button" aria-label="Up"></button><button type="button" aria-label="Down"></button></span></span>
            <span class="spin w103"><input aria-label="Joint 4" value="155.3762"><span class="ud"><button type="button" aria-label="Up"></button><button type="button" aria-label="Down"></button></span></span>
            <span class="spin w103"><input aria-label="Joint 5" value="-76.3035"><span class="ud"><button type="button" aria-label="Up"></button><button type="button" aria-label="Down"></button></span></span>
            <span class="spin w103"><input aria-label="Joint 6" value="-147.5296"><span class="ud"><button type="button" aria-label="Up"></button><button type="button" aria-label="Down"></button></span></span>
          </div>
          <button type="button" class="btn sq" aria-label="Copy"><svg class="bi"><use href="#i-copy"/></svg></button>
          <button type="button" class="btn sq" aria-label="Paste"><svg class="bi"><use href="#i-paste"/></svg></button>
        </div>
        <div class="line preset"><button type="button" class="btn low def">Set default</button><select class="short mono grow" aria-label="Default joints"><option>&nbsp;&nbsp;&nbsp;14.9,&nbsp;&nbsp;&nbsp;&nbsp;&nbsp;9.5,&nbsp;&nbsp;&nbsp;-26.9,&nbsp;&nbsp;&nbsp;154.5,&nbsp;&nbsp;&nbsp;-70.0,&nbsp;&nbsp;-144.5</option></select></div>
      </div>

      <footer>
        <div class="state"><label class="check"><input type="checkbox">Auto update</label><output>Path solved successfully.</output></div>
        <svg class="ok" viewBox="0 0 60 62" role="img" aria-label="Valid"><ellipse cx="30" cy="31" rx="29" ry="30.500" fill="url(#okg)" stroke="#0da834" stroke-width="2"/><path d="M7 31q4-4 8-3l9 9Q29 17 47 13q4 1 0 4-11 9-12 31-5 6-9 3Q20 38 7 31z" fill="#fff"/></svg>
        <button type="button" class="btn big">Update</button><button type="button" class="btn big">Simulate</button>
      </footer>
    </form>
  </section>
</main>
</body>
</html>
```

FILE: styles.css
```css
* { box-sizing: border-box; }
html, body { height: 100%; }
body {
  margin: 0;
  overflow: hidden;
  font: 15px/20px "Noto Sans", "Open Sans", sans-serif;
  color: #fff;
}
button, input, select, kbd { font: inherit; color: inherit; margin: 0; }
.defs { position: absolute; }

.station {
  position: relative;
  height: 100%;
  overflow: hidden;
  background: linear-gradient(#000032, #6060ac);
}
.robot { position: absolute; left: 150px; top: 280px; width: 560px; height: 900px; }
.engraving text { font: 700 22px "DejaVu Sans", sans-serif; fill: #a0a0a0; stroke: #626262; stroke-width: 1; }
.curve { position: absolute; left: 681px; top: 565px; width: 80px; height: 100px; }
.tag { position: absolute; font-size: 23px; line-height: 30px; color: #dcdce4; white-space: nowrap; }
.tag-path { left: 632px; top: 479px; }
.tag-frame { left: 704px; top: 529px; }
.tag-base { left: 361px; top: 1059px; width: 298px; overflow: hidden; }
.tag-home { left: 141px; top: 1156px; }

/* station tree */
.tree { position: relative; width: 407px; margin-top: -2px; display: flow-root; font-size: 23px; }
.tree ul { margin: 0; padding: 0; list-style: none; }
.row { display: flex; align-items: center; height: 37px; white-space: nowrap; padding-left: 6px; }
.row.l2 { padding-left: 36px; }
.row.l3 { padding-left: 66px; }
.row i { width: 30px; }
.row .exp::before { content: ""; display: block; width: 24px; height: 14px; background: #fff; clip-path: polygon(0 0, 100% 0, 50% 100%); }
.ico { width: 34px; height: 34px; margin-right: 7px; }
.selected { color: #08081c; background: linear-gradient(#2880dc, #2880dc) 0 0 / 33px 100% no-repeat, linear-gradient(#484882, #7878c8); }
.links { position: absolute; left: 0; top: 0; width: 100px; height: 296px; }

/* context menus */
.menu { position: absolute; background: #121212; font-size: 17px; box-shadow: 3px 3px 4px rgba(0, 0, 0, .55); }
.main-menu { left: 703px; top: 646px; width: 336px; }
.sub-menu { left: 1038px; top: 1009px; width: 256px; padding: 1px 0; }
.menu-title { height: 23px; margin-bottom: 1px; border: 2px solid #e4e4e4; text-align: center; line-height: 20px; font-size: 16px; }
.menu button { position: relative; display: flex; align-items: center; width: 100%; height: 33px; padding: 0 0 0 37px; border: 1px solid transparent; background: none; text-align: left; }
.menu hr { height: 2px; margin: 0 8px; border: 0; background: #1a1a1a; }
.menu .mi { position: absolute; left: 8px; top: 4px; width: 22px; height: 22px; }
.menu .mi.box { width: 20px; height: 20px; border: 1px solid #1e1e1e; }
.menu kbd { position: absolute; left: 270px; }
.menu .active { background: #2880dc; border-color: #4a9aec; color: #101418; }
.menu .more { position: absolute; right: 7px; width: 6px; height: 12px; background: #123a66; clip-path: polygon(0 0, 100% 50%, 0 100%); }
.dot { position: absolute; left: -4px; top: -6px; width: 13px; height: 13px; border: 5px solid #b5e61d; border-radius: 50%; background: #fff; }

/* green call-outs */
.mark { position: relative; }
.mark::after { content: ""; position: absolute; z-index: 2; border: 5px solid #b5e61d; pointer-events: none; }
.mark-spacing::after { inset: -5px -5px -5px -1px; }
.mark-teach::after { inset: -5px -4px; }
.mark-axis::after { inset: -14px -3px -15px -9px; }
.mark-rot::after { inset: -13px -24px -19px -14px; }
.mark-joints::after { inset: -16px -4px -15px -13px; }

/* dialog */
.dialog { position: absolute; top: 26px; right: 28px; width: 863px; max-width: 100%; border: 2px solid #4a4a68; border-radius: 8px; background: #2d2d2d; box-shadow: 0 8px 24px rgba(0, 0, 20, .3); overflow: hidden; }
.titlebar { display: flex; align-items: flex-start; justify-content: space-between; height: 43px; padding: 9px 1px 0 12px; background: #f3f3f3; }
.titlebar h1 { margin: 0; font-size: 17px; line-height: 24px; font-weight: 400; color: #929292; }
.close { width: 30px; height: 30px; padding: 0; border: 0; background: #dadada; color: #f3f3f3; font-weight: 700; }
.body { padding: 14px 13px; }
.line { display: flex; align-items: center; }
.grow { flex: 1; min-width: 0; }
.fill { flex: 1; }
.cap { height: 20px; margin-bottom: 4px; line-height: 18px; }
label, .unit, .fill { white-space: nowrap; }

.top { display: flex; justify-content: space-between; }
.left { width: 311px; padding-left: 3px; }
.right { width: 335px; padding-top: 4px; }
.picks { display: grid; grid-template-columns: 77px 230px; row-gap: 3px; align-items: center; }
.pick { position: relative; display: flex; }
.pick svg { position: absolute; left: 5px; top: 3px; width: 24px; height: 24px; pointer-events: none; }
.pick select { flex: 1; min-width: 0; padding-left: 30px; }
dl { display: grid; grid-template-columns: 76px 1fr; margin: 2px 0 33px; }
dd { margin: 0; }

select, .btn {
  height: 30px;
  border: 1px solid #515151;
  border-radius: 3px;
  outline: 1px solid #1f1f1f;
  background: linear-gradient(#404040, #343434);
}
select {
  appearance: none;
  width: 100%;
  padding: 0 24px 0 3px;
  background: url("data:image/svg+xml,%3Csvg xmlns='http://www.w3.org/2000/svg' width='12' height='6'%3E%3Cpath d='M0 0h12L6 6z' fill='%23b4b4b4'/%3E%3C/svg%3E") right 9px center no-repeat, linear-gradient(#404040, #343434);
}
select.short { height: 25px; }
.btn { display: inline-flex; align-items: center; justify-content: center; height: 31px; padding: 0; white-space: nowrap; }
.btn.low { height: 28px; }
.btn.sq { width: 37px; flex: none; padding-right: 1px; }
.btn.flat { border-color: transparent; outline: 0; background: none; }
.bi { width: 24px; height: 24px; }
.bi.ring { width: 20px; height: 20px; margin-right: 4px; }

.check { display: flex; align-items: center; gap: 9px; }
.check input { appearance: none; width: 20px; height: 20px; border: 1px solid #242424; background: #121212; }
.check input:checked { background: #121212 url("data:image/svg+xml,%3Csvg xmlns='http://www.w3.org/2000/svg' width='18' height='18'%3E%3Cpath d='M3 9l4.500 6L14 3' fill='none' stroke='%23dcdcdc' stroke-width='2.200'/%3E%3C/svg%3E") center no-repeat; }

.view-line { justify-content: space-between; width: 307px; margin-bottom: 3px; }
.more-btn { width: 151px; }
.group { border: 1px solid #3a3a3a; border-radius: 3px; margin-left: 1px; }
.input-group { width: 307px; padding: 5px 8px 8px 7px; }
.input-group .line { gap: 7px; margin-bottom: 7px; }
.input-group select { width: 142px; }
.input-group > .btn { width: 100%; }
.points { margin: 6px 0 5px; }

.spin { display: flex; height: 28px; font-size: 16px; }
.spin input { flex: 1; width: 0; min-width: 0; padding: 0 4px; border: 0; background: #121212; }
.ud { flex: none; width: 20px; display: flex; flex-direction: column; border: 1px solid #505050; border-left: 0; border-radius: 0 3px 3px 0; background: linear-gradient(#404040, #343434); }
.ud button { flex: 1; padding: 0; border: 0; background: none; display: flex; justify-content: center; align-items: center; }
.ud button::before { content: ""; width: 12px; height: 6px; background: #b4b4b4; clip-path: polygon(50% 0, 100% 100%, 0 100%); }
.ud button:last-child::before { clip-path: polygon(0 0, 100% 0, 50% 100%); }
.w185 { width: 185px; }
.w138 { width: 138px; }
.w103 { width: 103px; }
.w94 { width: 94px; }
.w80 { width: 80px; }
.speed { justify-content: space-between; margin-top: 5px; padding-right: 1px; }
.speed.first { margin-top: 6px; }
.tools { gap: 4px; margin-top: 4px; padding: 0 4px 0 3px; }
.sheet + .tools { margin-top: 3px; }
.tools .apart { margin-left: 20px; }
.sheet { height: 103px; margin-top: 1px; border: 1px solid #232323; background: #121212; }
table { width: 100%; border-collapse: collapse; table-layout: fixed; }
th { height: 31px; padding: 0; font-size: 16px; font-weight: 400; background: #323232; }
th.c1 { width: 158px; border-right: 1px solid #4e4e4e; }
th.c2 { width: 154px; }
td { height: 32px; padding: 0 1px; }
td select { display: block; }
td .spin { padding-left: 2px; }

.offset { display: grid; grid-template-columns: 97px 1fr; row-gap: 2px; align-items: center; margin-top: 3px; padding-right: 1px; }
.offset.wide { grid-template-columns: 136px 1fr; margin-top: 10px; }
.offset.frame-offset { margin-top: 11px; }
.offset > label { grid-row: span 2; }
.offset .line { gap: 5px; }
.offset > input { width: 100%; height: 28px; padding: 2px 2px 0; border: 1px solid #1f1f1f; border-radius: 3px; background: #121212; }
.mono { font: 15px/20px "Liberation Mono", "DejaVu Sans Mono", monospace; }
select.mono { padding-top: 2px; }

.algo { margin-top: 5px; padding-right: 1px; }
.algo label { width: 124px; }
.algo select { width: 274px; margin-right: 6px; }
.mark-teach { margin-right: 4px; }
.mark-teach .btn { display: flex; width: 78px; }
.show { margin-left: auto; padding: 0 7px 0 5px; }

.orient-cap { margin-top: 11px; }
.orient { height: 62px; padding: 0 0 2px 14px; gap: 3px; }
.mark-axis { gap: 3px; }
.mark-axis label { width: 150px; }
.spin.green input, .spin.violet input { padding-right: 6px; color: #101010; text-align: right; border-radius: 2px 0 0 2px; }
.spin.green input { background: #aeffae; }
.spin.violet input { background: #aeaeff; }
.axis { width: 38px; margin-left: 8px; }
.orient .flat { margin-left: 8px; }

.opt-cap { margin-top: 12px; }
.opt { height: 103px; padding: 13px 16px 0 15px; }
.def { width: 84px; margin-right: 11px; }
.mark-rot { width: max-content; gap: 10px; margin-top: 12px; }
.rot-label { width: 205px; }
.step-label { width: 107px; }
.spin.end input { padding-right: 6px; text-align: right; }
.joints-cap { margin-top: 10px; }
.joints { padding: 13px 16px 15px 15px; }
.joints .line { gap: 3px; }
.joints .preset { gap: 0; margin-top: 4px; }
.cur { width: 87px; }

footer { display: flex; align-items: center; gap: 11px; margin-top: 10px; padding-right: 1px; }
.state { flex: 1; display: grid; row-gap: 17px; }
.ok { width: 60px; height: 62px; }
.big { width: 78px; height: 60px; }
```
